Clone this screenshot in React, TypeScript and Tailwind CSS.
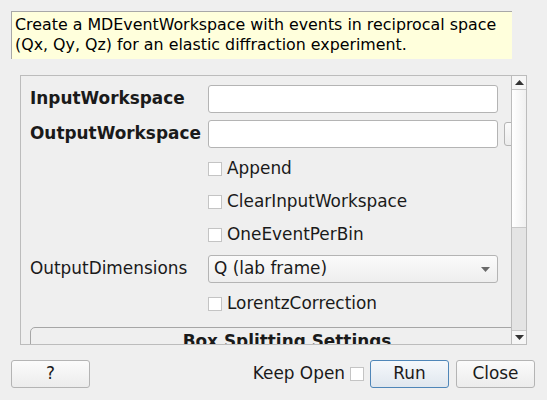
import React from 'react';

const font = { fontFamily: '"DejaVu Sans", "Liberation Sans", sans-serif' };

const Checkbox = () => (
  <span className="inline-block w-[14px] h-[14px] bg-white border border-[#c4c4c4] shrink-0" />
);

const TextInput = () => (
  <div className="w-[290px] h-[28px] bg-white border border-[#b4b4b4] rounded-[3px] shrink-0" />
);

const CheckRow = ({ label }: { label: string }) => (
  <div className="h-[33px] flex items-center pl-[178px] gap-[5px]">
    <Checkbox />
    <span>{label}</span>
  </div>
);

const Button = ({ children, primary }: { children: React.ReactNode; primary?: boolean }) => (
  <div
    className={
      primary
        ? 'w-[79px] h-[28px] flex items-center justify-center rounded-[3px] border border-[#4f86b8] bg-gradient-to-b from-[#f5f8fb] to-[#e0e7ee]'
        : 'w-[79px] h-[28px] flex items-center justify-center rounded-[3px] border border-[#b4b4b4] bg-gradient-to-b from-[#fbfbfb] to-[#ececec]'
    }
  >
    {children}
  </div>
);

export default function App() {
  return (
    <div className="w-[547px] h-[400px] bg-[#efefef] text-[16.9px] text-[#1a1a1a] overflow-hidden" style={font}>
      <div className="pt-[11px] pl-[11px]">
        {/* Description */}
        <div className="w-[501px] h-[48px] bg-[#ffffdc] border-t border-l border-[#a8a8a8] pl-[3px] pt-[3px] text-[15.85px] leading-[20px] text-black whitespace-nowrap overflow-hidden">
          Create a MDEventWorkspace with events in reciprocal space
          <br />
          (Qx, Qy, Qz) for an elastic diffraction experiment.
        </div>
      </div>

      {/* Scroll area */}
      <div className="ml-[20px] mt-[16px] w-[507px] h-[270px] border border-[#bcbcbc] flex">
        <div className="flex-1 overflow-hidden pl-[9px] pt-[9px]">
          <div className="w-[520px]">
            <div className="flex items-center h-[28px]">
              <span className="w-[178px] font-bold whitespace-nowrap">InputWorkspace</span>
              <TextInput />
            </div>
            <div className="flex items-center h-[28px] mt-[7px]">
              <span className="w-[178px] font-bold whitespace-nowrap">OutputWorkspace</span>
              <TextInput />
              <div className="ml-[6px] w-[20px] h-[24px] rounded-[3px] border border-[#b4b4b4] bg-gradient-to-b from-[#fbfbfb] to-[#ececec]" />
            </div>
            <div className="mt-[4px]">
              <CheckRow label="Append" />
              <CheckRow label="ClearInputWorkspace" />
              <CheckRow label="OneEventPerBin" />
            </div>
            <div className="flex items-center h-[28px] mt-[4px]">
              <span className="w-[178px]">OutputDimensions</span>
              <div className="w-[290px] h-[28px] rounded-[3px] border border-[#b4b4b4] bg-gradient-to-b from-[#fbfbfb] to-[#eeeeee] flex items-center justify-between pl-[5px] pr-[7px]">
                <span>Q (lab frame)</span>
                <svg width="9" height="5" viewBox="0 0 9 5">
                  <path d="M0 0 L9 0 L4.5 5 Z" fill="#6a6a6a" />
                </svg>
              </div>
            </div>
            <div className="h-[34px] flex items-center pl-[178px] gap-[5px] mt-[4px]">
              <Checkbox />
              <span>LorentzCorrection</span>
            </div>
            <div className="mt-[6px] w-[514px] h-[30px] rounded-t-[5px] border border-[#a6a6a6] bg-[#efefef] flex justify-center pt-[1px] font-bold">
              Box Splitting Settings
            </div>
          </div>
        </div>
        {/* Scrollbar */}
        <div className="w-[15px] border-l border-[#bcbcbc] flex flex-col">
          <div className="h-[14px] border-b border-[#c8c8c8] bg-[#f6f6f6] flex items-center justify-center">
            <svg width="9" height="5" viewBox="0 0 9 5">
              <path d="M0 5 L9 5 L4.5 0 Z" fill="#333" />
            </svg>
          </div>
          <div className="h-[138px] border-b border-[#c8c8c8] bg-gradient-to-r from-[#ffffff] to-[#f0f0f0]" />
          <div className="flex-1 bg-[#e4e4e4]" />
          <div className="h-[14px] border-t border-[#c8c8c8] bg-[#f6f6f6] flex items-center justify-center">
            <svg width="9" height="5" viewBox="0 0 9 5">
              <path d="M0 0 L9 0 L4.5 5 Z" fill="#333" />
            </svg>
          </div>
        </div>
      </div>

      {/* Bottom buttons */}
      <div className="mt-[15px] flex items-center pl-[11px] pr-[12px]">
        <Button>?</Button>
        <div className="flex-1" />
        <span>Keep Open</span>
        <span className="ml-[5px] flex">
          <Checkbox />
        </span>
        <div className="ml-[6px]">
          <Button primary>Run</Button>
        </div>
        <div className="ml-[7px]">
          <Button>Close</Button>
        </div>
      </div>
    </div>
  );
}
